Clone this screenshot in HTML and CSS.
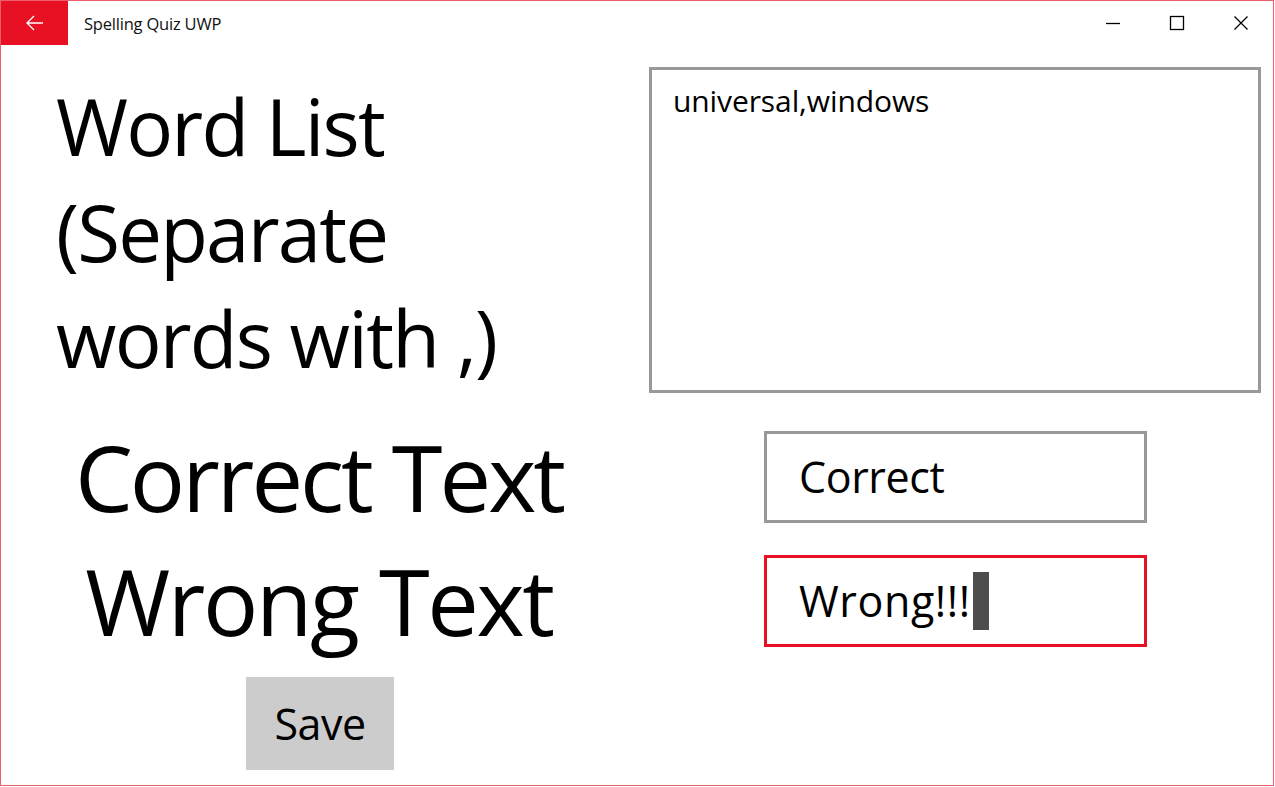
FILE: index.html
```html
<!DOCTYPE html>
<html lang="en">
<head>
<meta charset="utf-8">
<title>Spelling Quiz UWP</title>
<link rel="stylesheet" href="styles.css">
</head>
<body>
<div class="window">
  <header class="titlebar">
    <div class="back-btn">
      <svg width="18" height="16" viewBox="0 0 18 16"><path d="M1 8 H17 M8 1 L1 8 L8 15" fill="none" stroke="#fff" stroke-width="1.3"/></svg>
    </div>
    <div class="app-title">Spelling Quiz UWP</div>
    <div class="caption-btns">
      <div class="cap-btn"><svg width="16" height="16" viewBox="0 0 16 16"><path d="M1 8.5 H15" stroke="#000" stroke-width="1.3"/></svg></div>
      <div class="cap-btn"><svg width="16" height="16" viewBox="0 0 16 16"><rect x="1.5" y="1.5" width="13" height="13" fill="none" stroke="#000" stroke-width="1.3"/></svg></div>
      <div class="cap-btn"><svg width="16" height="16" viewBox="0 0 16 16"><path d="M1.5 1.5 L14.5 14.5 M14.5 1.5 L1.5 14.5" stroke="#000" stroke-width="1.3"/></svg></div>
    </div>
  </header>
  <main class="content">
    <div class="wordlist-label">Word List<br>(Separate<br>words with ,)</div>
    <div class="wordlist-cell">
      <div class="wordlist-box">universal,windows</div>
    </div>
    <div class="big-label">Correct Text</div>
    <div class="field-cell">
      <div class="field">Correct</div>
    </div>
    <div class="big-label big-label-wrong">Wrong Text</div>
    <div class="field-cell">
      <div class="field field-focus">Wrong!!!<span class="caret"></span></div>
    </div>
    <div class="save-cell">
      <div class="save-btn">Save</div>
    </div>
    <div></div>
  </main>
</div>
</body>
</html>
```
FILE: styles.css
```css
* { box-sizing: border-box; }
html, body {
  margin: 0;
  padding: 0;
  background: #fff;
}
body {
  font-family: "Open Sans", "Noto Sans", sans-serif;
  color: #000;
}
.window {
  width: 1274px;
  height: 786px;
  border: 1px solid #ec5f6b;
  display: flex;
  flex-direction: column;
  overflow: hidden;
}
.titlebar {
  height: 44px;
  display: flex;
  align-items: center;
  flex-shrink: 0;
}
.back-btn {
  background: #e81123;
  display: flex;
  align-items: center;
  justify-content: center;
  margin-left: -1px;
  margin-top: -1px;
  height: 45px;
  width: 68px;
}
.back-btn svg { margin-left: 1px; }
.app-title {
  font-size: 16.5px;
  letter-spacing: -0.2px;
  padding-left: 16px;
  flex: 1;
  color: #111;
}
.caption-btns {
  display: flex;
  height: 44px;
}
.cap-btn {
  width: 64px;
  height: 44px;
  display: flex;
  align-items: center;
  justify-content: center;
}
.content {
  flex: 1;
  display: grid;
  grid-template-columns: 636px 636px;
  grid-template-rows: 370px 124px 124px 1fr;
}
.wordlist-label {
  font-size: 78px;
  line-height: 106px;
  letter-spacing: -1.8px;
  padding-left: 55px;
  padding-top: 28px;
  white-space: nowrap;
}
.wordlist-cell {
  padding-left: 12px;
  padding-top: 22px;
}
.wordlist-box {
  width: 612px;
  height: 326px;
  border: 3px solid #999;
  font-size: 30px;
  line-height: 40px;
  letter-spacing: -0.1px;
  padding: 11px 21px;
}
.big-label {
  font-size: 92px;
  line-height: 124px;
  letter-spacing: -3px;
  text-align: center;
  white-space: nowrap;
}
.big-label-wrong {
  letter-spacing: -2.4px;
}
.field-cell {
  display: flex;
  align-items: center;
  justify-content: center;
  padding-left: 1px;
}
.field {
  width: 383px;
  height: 92px;
  border: 3px solid #999;
  font-size: 43px;
  letter-spacing: -0.4px;
  padding-left: 32px;
  display: flex;
  align-items: center;
  line-height: 58px;
}
.field-focus {
  border-color: #e81123;
  letter-spacing: 0.6px;
}
.caret {
  display: inline-block;
  width: 16px;
  height: 58px;
  background: #4d4d4d;
  margin-left: 2px;
}
.save-cell {
  display: flex;
  justify-content: center;
  align-items: flex-start;
  padding-top: 14px;
  padding-left: 2px;
}
.save-btn {
  width: 148px;
  height: 93px;
  background: #cccccc;
  font-size: 43px;
  display: flex;
  align-items: center;
  justify-content: center;
  letter-spacing: -0.5px;
}
```
